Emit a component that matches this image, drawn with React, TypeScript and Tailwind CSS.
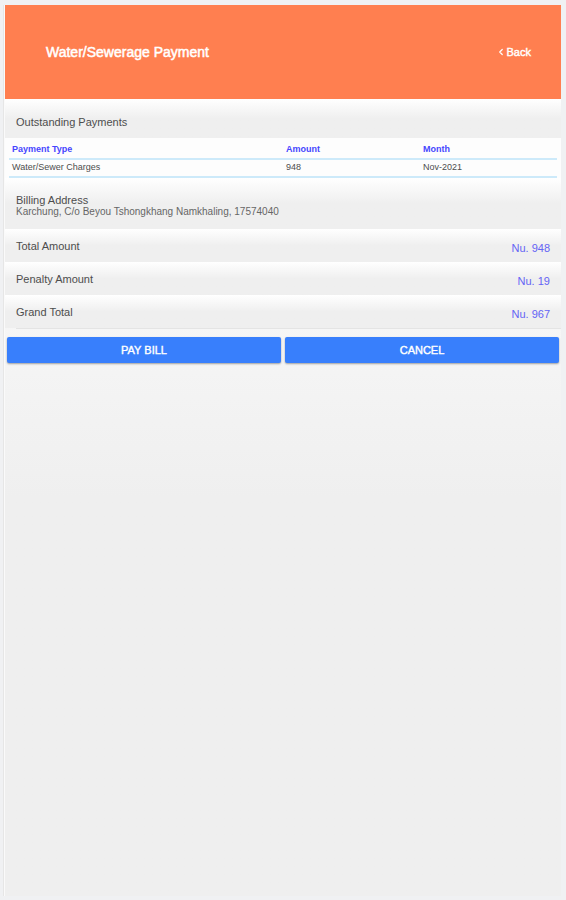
import { ChevronLeft } from 'lucide-react';

type Charge = {
  type: string;
  amount: number;
  month: string;
};

const charges: Charge[] = [
  { type: 'Water/Sewer Charges', amount: 948, month: 'Nov-2021' },
];

const totals = [
  { label: 'Total Amount', value: 948 },
  { label: 'Penalty Amount', value: 19 },
  { label: 'Grand Total', value: 967 },
];

const fade = 'bg-linear-to-b from-white to-[#efefef] to-50%';

function ActionButton({ children }: { children: string }) {
  return (
    <button
      type="button"
      className="h-[26px] flex-1 rounded-xs bg-[#387ffc] text-[11px] text-white uppercase shadow-[0_1px_2px_rgba(0,0,0,0.35)] [-webkit-text-stroke:0.4px_white]"
    >
      {children}
    </button>
  );
}

export default function App() {
  return (
    <div className="flex min-h-screen flex-col bg-[#f0f1f3] px-[5px] pt-[5px] pb-1 font-['Liberation_Sans',sans-serif] text-[#4d4d4d]">
      <main className="flex flex-1 flex-col bg-[#efefef] shadow-[-1px_0_0_#fafafa,-2px_0_0_#e6e6e6]">
        <header className="flex h-[94px] items-center justify-between bg-[#ff7f50] pr-[30px] pl-[41px] text-white">
          <h1 className="text-[14px] [-webkit-text-stroke:0.5px_white]">Water/Sewerage Payment</h1>
          <a
            href="#"
            className="flex items-center gap-px text-[11px] [-webkit-text-stroke:0.4px_white]"
          >
            <ChevronLeft className="size-[10px]" strokeWidth={3} />
            Back
          </a>
        </header>

        <div className={`${fade} flex-1`}>
          <section>
            <h2 className={`${fade} flex h-[39px] items-center px-[11px] pt-2 text-[11px]`}>
              Outstanding Payments
            </h2>
            <div className="bg-[#fdfdfd] px-1">
              <table className="w-full table-fixed text-left text-[9px]">
                <thead>
                  <tr className="h-[21px] border-b-2 border-[#cdeafa] text-[#4646ff]">
                    <th className="w-1/2 px-[3px] pt-1 font-bold">Payment Type</th>
                    <th className="w-1/4 px-[3px] pt-1 font-bold">Amount</th>
                    <th className="w-1/4 px-[3px] pt-1 font-bold">Month</th>
                  </tr>
                </thead>
                <tbody>
                  {charges.map((charge) => (
                    <tr key={charge.type} className="h-[18px] border-b-2 border-[#cdeafa]">
                      <td className="px-[3px]">{charge.type}</td>
                      <td className="px-[3px]">{charge.amount}</td>
                      <td className="px-[3px]">{charge.month}</td>
                    </tr>
                  ))}
                </tbody>
              </table>
            </div>
          </section>

          <section className={`${fade} h-[51px] px-[11px] pt-4`}>
            <h2 className="text-[11px] leading-3">Billing Address</h2>
            <p className="text-[10px] leading-3 text-[#666]">
              Karchung, C/o Beyou Tshongkhang Namkhaling, 17574040
            </p>
          </section>

          <dl>
            {totals.map((row) => (
              <div
                key={row.label}
                className={`${fade} flex h-[33px] items-center justify-between px-[11px] pt-0.5`}
              >
                <dt className="text-[11px]">{row.label}</dt>
                <dd className="pt-1 text-[11px] text-[#6464f5]">Nu. {row.value}</dd>
              </div>
            ))}
          </dl>

          <div className="ml-[11px] border-t border-[#e4e4e4]" />
          <div className="flex gap-1 px-0.5 pt-2">
            <ActionButton>Pay Bill</ActionButton>
            <ActionButton>Cancel</ActionButton>
          </div>
        </div>
      </main>
    </div>
  );
}
